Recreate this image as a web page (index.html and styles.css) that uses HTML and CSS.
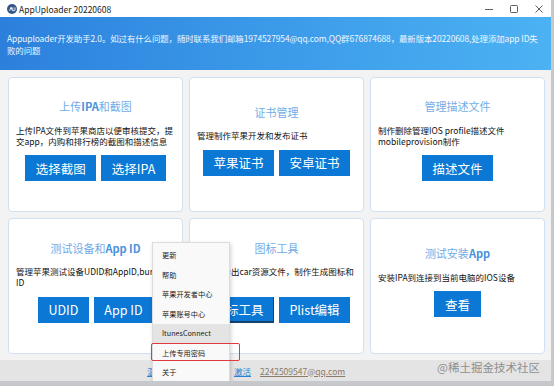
FILE: index.html
```html
<!DOCTYPE html>
<html lang="zh-CN">
<head>
  <meta charset="UTF-8">
  <title>AppUploader 20220608</title>
  <link rel="stylesheet" href="styles.css">
</head>
<body>
  <div class="window">
    <div class="titlebar">
      <svg class="app-icon" width="10" height="10" viewBox="0 0 10 10">
        <circle cx="5" cy="5" r="5" fill="#34558a"/>
        <path d="M2.6 6.8 L4 3.2 L5.4 6.8 M5.8 3.4 V5.6 Q5.8 6.8 6.9 6.8 Q8 6.8 8 5.6 V3.4" stroke="#fff" stroke-width="0.9" fill="none"/>
      </svg>
      <span class="app-title">AppUploader 20220608</span>
      <div class="win-controls">
        <svg width="10" height="10" viewBox="0 0 10 10"><path d="M1 5.5 H9" stroke="#333" stroke-width="0.8"/></svg>
        <svg width="10" height="10" viewBox="0 0 10 10"><rect x="1.5" y="1.5" width="7" height="7" rx="1" stroke="#333" stroke-width="0.8" fill="none"/></svg>
        <svg width="10" height="10" viewBox="0 0 10 10"><path d="M1.5 1.5 L8.5 8.5 M8.5 1.5 L1.5 8.5" stroke="#333" stroke-width="0.8"/></svg>
      </div>
    </div>

    <div class="banner">
      Appuploader开发助手2.0。如过有什么问题，随时联系我们邮箱1974527954@qq.com,QQ群676874688，最新版本20220608,处理添加app ID失<br>败的问题
    </div>

    <div class="cards">
      <div class="card">
        <div class="card-title">上传<b>IPA</b>和截图</div>
        <div class="card-desc">上传IPA文件到苹果商店以便审核提交，提交app，内购和排行榜的截图和描述信息</div>
        <div class="card-btns">
          <button>选择截图</button>
          <button>选择IPA</button>
        </div>
      </div>
      <div class="card">
        <div class="card-title">证书管理</div>
        <div class="card-desc">管理制作苹果开发和发布证书</div>
        <div class="card-btns">
          <button>苹果证书</button>
          <button>安卓证书</button>
        </div>
      </div>
      <div class="card">
        <div class="card-title">管理描述文件</div>
        <div class="card-desc">制作删除管理IOS profile描述文件 mobileprovision制作</div>
        <div class="card-btns">
          <button>描述文件</button>
        </div>
      </div>
      <div class="card">
        <div class="card-title">测试设备和<b>App ID</b></div>
        <div class="card-desc">管理苹果测试设备UDID和AppID,bundle ID</div>
        <div class="card-btns">
          <button>UDID</button>
          <button>App ID</button>
        </div>
      </div>
      <div class="card">
        <div class="card-title">图标工具</div>
        <div class="card-desc">解包或导出car资源文件，制作生成图标和启动图</div>
        <div class="card-btns">
          <button class="focused">图标工具</button>
          <button>Plist编辑</button>
        </div>
      </div>
      <div class="card">
        <div class="card-title">测试安装<b>App</b></div>
        <div class="card-desc">安装IPA到连接到当前电脑的IOS设备</div>
        <div class="card-btns">
          <button>查看</button>
        </div>
      </div>
    </div>

    <div class="statusbar">
      <a class="link">温馨提示</a>
      <a class="link activate">激活</a>
      <a class="mail">2242509547@qq.com</a>
    </div>

    <!-- 右键菜单 -->
    <div class="menu">
      <div class="menu-item">更新</div>
      <div class="menu-item">帮助</div>
      <div class="menu-item">苹果开发者中心</div>
      <div class="menu-item">苹果账号中心</div>
      <div class="menu-item hover">ItunesConnect</div>
      <div class="menu-item">上传专用密码</div>
      <div class="menu-item">关于</div>
    </div>
    <div class="mark-box"></div>

    <div class="watermark">@稀土掘金技术社区</div>
  </div>
</body>
</html>
```

FILE: styles.css
```css
html, body { margin:0; padding:0; }
body {
  width:554px; height:386px; overflow:hidden;
  background:#c6c8cc;
  font-family:"Noto Sans CJK SC", "Microsoft YaHei", sans-serif;
}
.window {
  position:relative;
  width:551px; height:381px;
  background:#f3f3f3;
  display:flex; flex-direction:column;
  overflow:hidden;
}
.titlebar {
  height:17px; flex:none;
  background:#fff;
  display:flex; align-items:center;
  padding-left:7px;
}
.app-icon { margin-right:2px; }
.app-title { font-size:8.5px; color:#1a1a1a; }
.win-controls {
  margin-left:auto; margin-right:7px;
  display:flex; gap:15px;
}
.banner {
  height:53px; flex:none; box-sizing:border-box;
  padding:15px 0 0 7px;
  background:linear-gradient(90deg, #2c80dc 0%, #3a98e8 45%, #4cb2f3 100%);
  color:#eef6ff;
  font-size:8.45px; line-height:12px;
  letter-spacing:-0.1px;
}
.cards {
  display:grid;
  grid-template-columns:175px 175px 175px;
  grid-template-rows:135px 136px;
  gap:6px;
  padding:7px 0 0 8px;
}
.card {
  background:#fff;
  border:1px solid #cfe0f2;
  border-radius:4px;
  display:flex; flex-direction:column; justify-content:center;
  padding-bottom:9px;
  box-sizing:border-box;
}
.card-title {
  text-align:center;
  font-size:11px; line-height:14px;
  color:#72ace6;
  margin-bottom:11.5px;
}
.card-title b { color:#4a92dc; }
.card-desc {
  font-size:8.5px; line-height:11px;
  color:#111;
  padding:0 7px;
}
.card-btns {
  display:flex; justify-content:center; gap:5px;
  margin-top:8.5px;
}
.card-btns button {
  height:26px;
  padding:0 10.5px;
  border:none; border-radius:0;
  background:#0a78d4;
  color:#fff;
  font-family:inherit;
  font-size:12.5px;
}
.card-btns button.focused { box-shadow:inset -1px -2px 0 #17426c; }
.statusbar {
  margin-top:auto;
  height:21px;
  background:#e4e4e4;
  display:flex; align-items:center; gap:9px;
  padding-left:147px;
  font-size:8.5px;
}
.link { color:#2b7fd0; text-decoration:underline; }
.activate { margin-left:44px; }
.mail { color:#8b7b68; text-decoration:underline; }
.menu {
  position:absolute; left:152px; top:242px;
  width:78px; height:150px;
  box-sizing:border-box;
  padding-top:3px;
  background:#f9f9f9;
  border:1px solid #dcdcdc;
  box-shadow:1px 2px 4px rgba(0,0,0,0.18);
}
.menu-item {
  height:19.5px; line-height:19.5px;
  padding-left:9px;
  font-size:7.2px; color:#222;
}
.menu-item.hover { background:#e4e4e4; }
.mark-box {
  position:absolute; left:151px; top:343px;
  width:89px; height:18px;
  box-sizing:border-box;
  border:1.5px solid #e2393a;
  border-radius:2px;
}
.watermark {
  position:absolute; left:437px; top:359px;
  font-size:11.5px; color:rgba(110,110,110,0.75);
}
```
